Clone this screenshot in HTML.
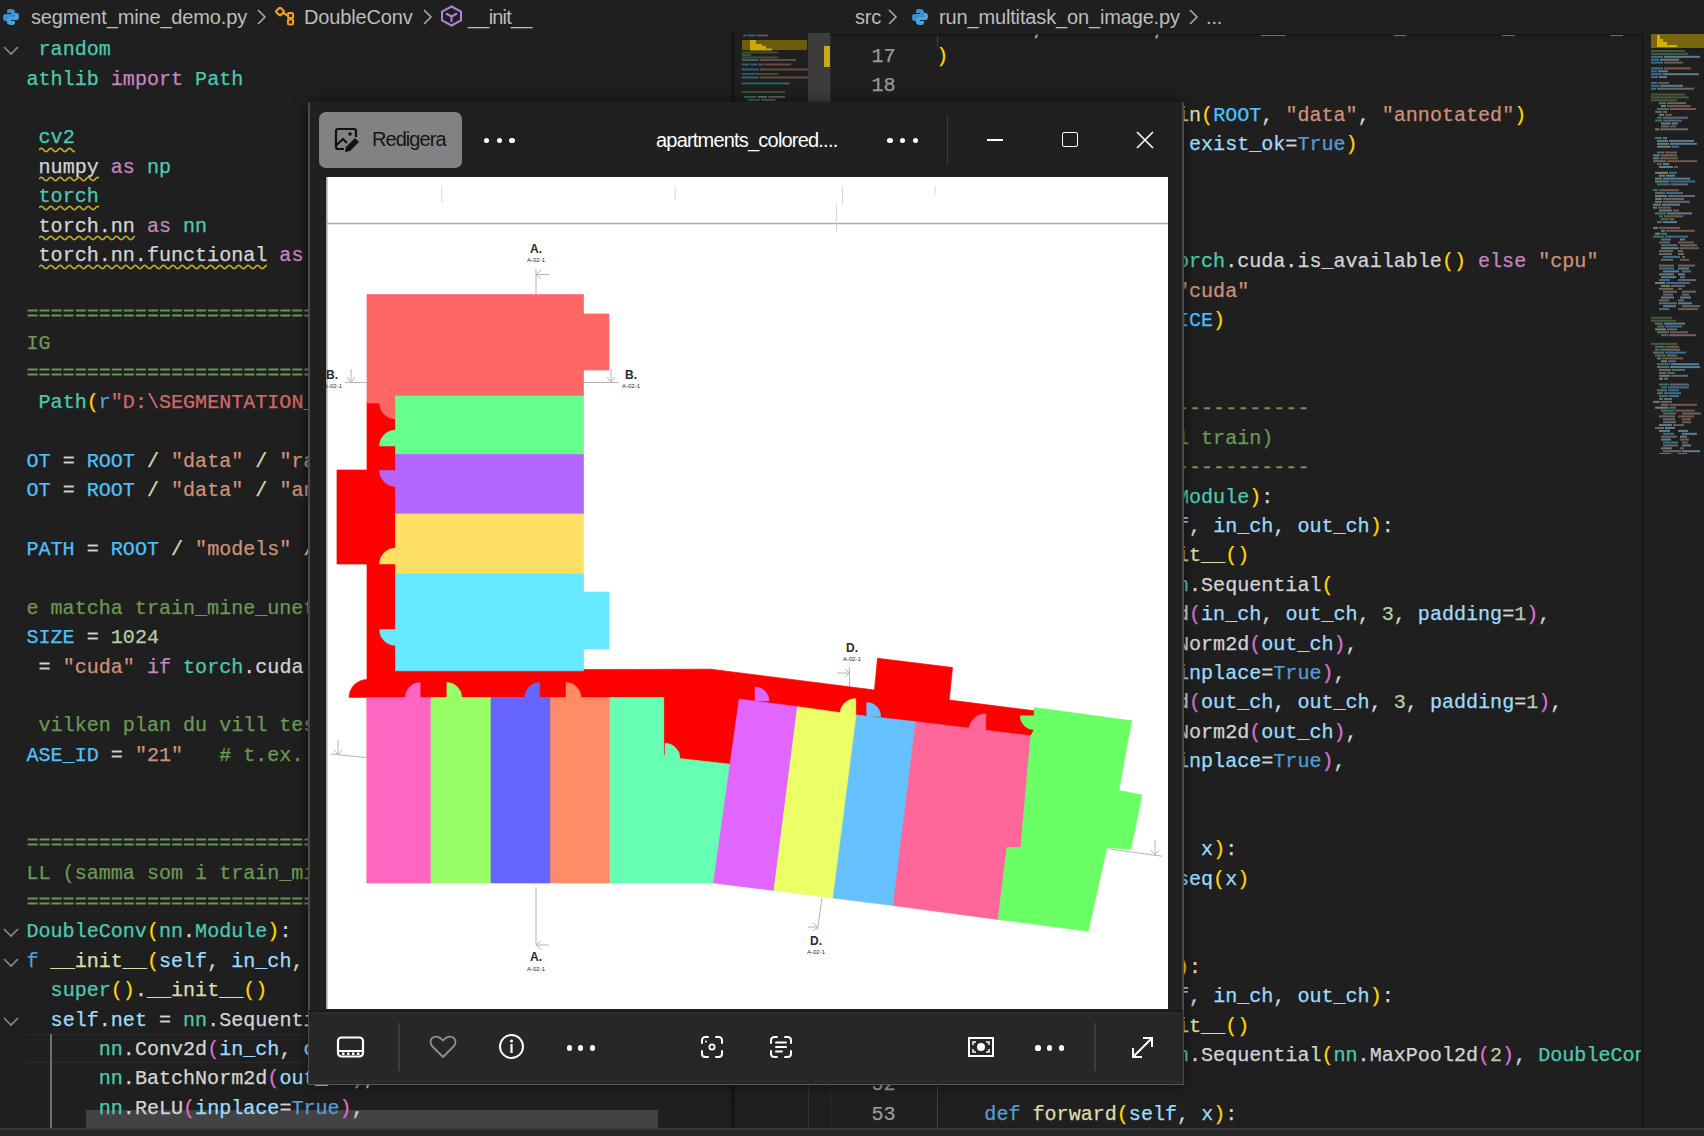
<!DOCTYPE html><html><head><meta charset="utf-8"><style>
*{margin:0;padding:0;box-sizing:border-box}
html,body{width:1704px;height:1136px;overflow:hidden;background:#1f1f1f}
body{position:relative;font-family:"Liberation Sans",sans-serif}
.ab{position:absolute}
.code{position:absolute;font-family:"Liberation Mono",monospace;font-size:20.075px;-webkit-text-stroke:0.25px currentColor;line-height:29.4px;height:29.4px;white-space:pre}
.bc{position:absolute;font-family:"Liberation Sans",sans-serif;font-size:20px;letter-spacing:-0.15px;line-height:24px;color:#bdbdbd;white-space:pre}
</style></head><body>
<div class="ab" style="left:0;top:0;width:830px;height:1128px;overflow:hidden"><div class="ab" style="left:86px;top:1110px;width:572px;height:18px;background:#434343"></div><div class="code" style="left:26.5px;top:35.1px"><span style="color:#D4D4D4"> </span><span style="color:#4EC9B0">random</span></div><div class="code" style="left:26.5px;top:64.5px"><span style="color:#4EC9B0">athlib</span><span style="color:#D4D4D4"> </span><span style="color:#C586C0">import</span><span style="color:#D4D4D4"> </span><span style="color:#4EC9B0">Path</span></div><div class="code" style="left:26.5px;top:123.3px"><span style="color:#D4D4D4"> </span><span style="color:#4EC9B0">cv2</span></div><div class="code" style="left:26.5px;top:152.7px"><span style="color:#D4D4D4"> </span><span style="color:#D4D4D4">numpy</span><span style="color:#D4D4D4"> </span><span style="color:#C586C0">as</span><span style="color:#D4D4D4"> </span><span style="color:#4EC9B0">np</span></div><div class="code" style="left:26.5px;top:182.1px"><span style="color:#D4D4D4"> </span><span style="color:#4EC9B0">torch</span></div><div class="code" style="left:26.5px;top:211.5px"><span style="color:#D4D4D4"> </span><span style="color:#D4D4D4">torch.nn</span><span style="color:#D4D4D4"> </span><span style="color:#C586C0">as</span><span style="color:#D4D4D4"> </span><span style="color:#4EC9B0">nn</span></div><div class="code" style="left:26.5px;top:240.9px"><span style="color:#D4D4D4"> </span><span style="color:#D4D4D4">torch.nn.functional</span><span style="color:#D4D4D4"> </span><span style="color:#C586C0">as</span><span style="color:#D4D4D4"> </span><span style="color:#4EC9B0">F</span></div><div class="code" style="left:26.5px;top:299.8px"><span style="color:#6A9955">======================================================================</span></div><div class="code" style="left:26.5px;top:329.2px"><span style="color:#6A9955">IG</span></div><div class="code" style="left:26.5px;top:358.6px"><span style="color:#6A9955">======================================================================</span></div><div class="code" style="left:26.5px;top:388.0px"><span style="color:#D4D4D4"> </span><span style="color:#4EC9B0">Path</span><span style="color:#FFD700">(</span><span style="color:#569CD6">r</span><span style="color:#D16969">&quot;D:\SEGMENTATION_DATA&quot;</span><span style="color:#FFD700">)</span></div><div class="code" style="left:26.5px;top:446.8px"><span style="color:#4FC1FF">OT</span><span style="color:#D4D4D4"> = </span><span style="color:#4FC1FF">ROOT</span><span style="color:#D8D8B0"> / </span><span style="color:#CE9178">&quot;data&quot;</span><span style="color:#D8D8B0"> / </span><span style="color:#CE9178">&quot;raw&quot;</span></div><div class="code" style="left:26.5px;top:476.2px"><span style="color:#4FC1FF">OT</span><span style="color:#D4D4D4"> = </span><span style="color:#4FC1FF">ROOT</span><span style="color:#D8D8B0"> / </span><span style="color:#CE9178">&quot;data&quot;</span><span style="color:#D8D8B0"> / </span><span style="color:#CE9178">&quot;annotated&quot;</span></div><div class="code" style="left:26.5px;top:535.0px"><span style="color:#4FC1FF">PATH</span><span style="color:#D4D4D4"> = </span><span style="color:#4FC1FF">ROOT</span><span style="color:#D8D8B0"> / </span><span style="color:#CE9178">&quot;models&quot;</span><span style="color:#D8D8B0"> / </span><span style="color:#CE9178">&quot;unet.pth&quot;</span></div><div class="code" style="left:26.5px;top:593.8px"><span style="color:#6A9955">e matcha train_mine_unet.py</span></div><div class="code" style="left:26.5px;top:623.2px"><span style="color:#4FC1FF">SIZE</span><span style="color:#D4D4D4"> = </span><span style="color:#B5CEA8">1024</span></div><div class="code" style="left:26.5px;top:652.6px"><span style="color:#D4D4D4"> = </span><span style="color:#CE9178">&quot;cuda&quot;</span><span style="color:#D4D4D4"> </span><span style="color:#C586C0">if</span><span style="color:#D4D4D4"> </span><span style="color:#4EC9B0">torch</span><span style="color:#D4D4D4">.cuda.is_available</span><span style="color:#FFD700">()</span></div><div class="code" style="left:26.5px;top:711.4px"><span style="color:#6A9955"> vilken plan du vill testa</span></div><div class="code" style="left:26.5px;top:740.8px"><span style="color:#4FC1FF">ASE_ID</span><span style="color:#D4D4D4"> = </span><span style="color:#CE9178">&quot;21&quot;</span><span style="color:#D4D4D4">   </span><span style="color:#6A9955"># t.ex. 21</span></div><div class="code" style="left:26.5px;top:829.1px"><span style="color:#6A9955">======================================================================</span></div><div class="code" style="left:26.5px;top:858.5px"><span style="color:#6A9955">LL (samma som i train_mine_unet.py)</span></div><div class="code" style="left:26.5px;top:887.9px"><span style="color:#6A9955">======================================================================</span></div><div class="code" style="left:26.5px;top:917.3px"><span style="color:#4EC9B0">DoubleConv</span><span style="color:#FFD700">(</span><span style="color:#4EC9B0">nn</span><span style="color:#D4D4D4">.</span><span style="color:#4EC9B0">Module</span><span style="color:#FFD700">)</span><span style="color:#D4D4D4">:</span></div><div class="code" style="left:26.5px;top:946.7px"><span style="color:#569CD6">f</span><span style="color:#D4D4D4"> </span><span style="color:#DCDCAA">__init__</span><span style="color:#FFD700">(</span><span style="color:#9CDCFE">self</span><span style="color:#D4D4D4">, </span><span style="color:#9CDCFE">in_ch</span><span style="color:#D4D4D4">, </span><span style="color:#9CDCFE">out_ch</span><span style="color:#FFD700">)</span><span style="color:#D4D4D4">:</span></div><div class="code" style="left:26.5px;top:976.1px"><span style="color:#D4D4D4">  </span><span style="color:#4EC9B0">super</span><span style="color:#FFD700">()</span><span style="color:#D4D4D4">.</span><span style="color:#DCDCAA">__init__</span><span style="color:#FFD700">()</span></div><div class="code" style="left:26.5px;top:1005.5px"><span style="color:#D4D4D4">  </span><span style="color:#9CDCFE">self</span><span style="color:#D4D4D4">.</span><span style="color:#9CDCFE">net</span><span style="color:#D4D4D4"> = </span><span style="color:#4EC9B0">nn</span><span style="color:#D4D4D4">.Sequential</span><span style="color:#FFD700">(</span></div><div class="code" style="left:26.5px;top:1034.9px"><span style="color:#D4D4D4">      </span><span style="color:#4EC9B0">nn</span><span style="color:#D4D4D4">.Conv2d</span><span style="color:#DA70D6">(</span><span style="color:#9CDCFE">in_ch</span><span style="color:#D4D4D4">, </span><span style="color:#9CDCFE">out_ch</span><span style="color:#D4D4D4">, </span><span style="color:#B5CEA8">3</span><span style="color:#DA70D6">)</span><span style="color:#D4D4D4">,</span></div><div class="code" style="left:26.5px;top:1064.3px"><span style="color:#D4D4D4">      </span><span style="color:#4EC9B0">nn</span><span style="color:#D4D4D4">.BatchNorm2d</span><span style="color:#DA70D6">(</span><span style="color:#9CDCFE">out_ch</span><span style="color:#DA70D6">)</span><span style="color:#D4D4D4">,</span></div><div class="code" style="left:26.5px;top:1093.7px"><span style="color:#D4D4D4">      </span><span style="color:#4EC9B0">nn</span><span style="color:#D4D4D4">.ReLU</span><span style="color:#DA70D6">(</span><span style="color:#9CDCFE">inplace</span><span style="color:#D4D4D4">=</span><span style="color:#569CD6">True</span><span style="color:#DA70D6">)</span><span style="color:#D4D4D4">,</span></div><svg class="ab" style="left:38.5px;top:145.5px" width="36" height="8"><path d="M0 4 q2.35 -3.4 4.7 0 q2.35 3.4 4.7 0 q2.35 -3.4 4.7 0 q2.35 3.4 4.7 0 q2.35 -3.4 4.7 0 q2.35 3.4 4.7 0 q2.35 -3.4 4.7 0 q2.35 3.4 4.7 0" fill="none" stroke="#BBA835" stroke-width="1.7"/></svg><svg class="ab" style="left:38.5px;top:174.9px" width="60" height="8"><path d="M0 4 q2.35 -3.4 4.7 0 q2.35 3.4 4.7 0 q2.35 -3.4 4.7 0 q2.35 3.4 4.7 0 q2.35 -3.4 4.7 0 q2.35 3.4 4.7 0 q2.35 -3.4 4.7 0 q2.35 3.4 4.7 0 q2.35 -3.4 4.7 0 q2.35 3.4 4.7 0 q2.35 -3.4 4.7 0 q2.35 3.4 4.7 0 q2.35 -3.4 4.7 0 q2.35 3.4 4.7 0" fill="none" stroke="#BBA835" stroke-width="1.7"/></svg><svg class="ab" style="left:38.5px;top:204.3px" width="60" height="8"><path d="M0 4 q2.35 -3.4 4.7 0 q2.35 3.4 4.7 0 q2.35 -3.4 4.7 0 q2.35 3.4 4.7 0 q2.35 -3.4 4.7 0 q2.35 3.4 4.7 0 q2.35 -3.4 4.7 0 q2.35 3.4 4.7 0 q2.35 -3.4 4.7 0 q2.35 3.4 4.7 0 q2.35 -3.4 4.7 0 q2.35 3.4 4.7 0 q2.35 -3.4 4.7 0 q2.35 3.4 4.7 0" fill="none" stroke="#BBA835" stroke-width="1.7"/></svg><svg class="ab" style="left:38.5px;top:233.7px" width="96" height="8"><path d="M0 4 q2.35 -3.4 4.7 0 q2.35 3.4 4.7 0 q2.35 -3.4 4.7 0 q2.35 3.4 4.7 0 q2.35 -3.4 4.7 0 q2.35 3.4 4.7 0 q2.35 -3.4 4.7 0 q2.35 3.4 4.7 0 q2.35 -3.4 4.7 0 q2.35 3.4 4.7 0 q2.35 -3.4 4.7 0 q2.35 3.4 4.7 0 q2.35 -3.4 4.7 0 q2.35 3.4 4.7 0 q2.35 -3.4 4.7 0 q2.35 3.4 4.7 0 q2.35 -3.4 4.7 0 q2.35 3.4 4.7 0 q2.35 -3.4 4.7 0 q2.35 3.4 4.7 0 q2.35 -3.4 4.7 0 q2.35 3.4 4.7 0" fill="none" stroke="#BBA835" stroke-width="1.7"/></svg><svg class="ab" style="left:38.5px;top:263.1px" width="228" height="8"><path d="M0 4 q2.35 -3.4 4.7 0 q2.35 3.4 4.7 0 q2.35 -3.4 4.7 0 q2.35 3.4 4.7 0 q2.35 -3.4 4.7 0 q2.35 3.4 4.7 0 q2.35 -3.4 4.7 0 q2.35 3.4 4.7 0 q2.35 -3.4 4.7 0 q2.35 3.4 4.7 0 q2.35 -3.4 4.7 0 q2.35 3.4 4.7 0 q2.35 -3.4 4.7 0 q2.35 3.4 4.7 0 q2.35 -3.4 4.7 0 q2.35 3.4 4.7 0 q2.35 -3.4 4.7 0 q2.35 3.4 4.7 0 q2.35 -3.4 4.7 0 q2.35 3.4 4.7 0 q2.35 -3.4 4.7 0 q2.35 3.4 4.7 0 q2.35 -3.4 4.7 0 q2.35 3.4 4.7 0 q2.35 -3.4 4.7 0 q2.35 3.4 4.7 0 q2.35 -3.4 4.7 0 q2.35 3.4 4.7 0 q2.35 -3.4 4.7 0 q2.35 3.4 4.7 0 q2.35 -3.4 4.7 0 q2.35 3.4 4.7 0 q2.35 -3.4 4.7 0 q2.35 3.4 4.7 0 q2.35 -3.4 4.7 0 q2.35 3.4 4.7 0 q2.35 -3.4 4.7 0 q2.35 3.4 4.7 0 q2.35 -3.4 4.7 0 q2.35 3.4 4.7 0 q2.35 -3.4 4.7 0 q2.35 3.4 4.7 0 q2.35 -3.4 4.7 0 q2.35 3.4 4.7 0 q2.35 -3.4 4.7 0 q2.35 3.4 4.7 0 q2.35 -3.4 4.7 0 q2.35 3.4 4.7 0 q2.35 -3.4 4.7 0 q2.35 3.4 4.7 0" fill="none" stroke="#BBA835" stroke-width="1.7"/></svg><svg class="ab" style="left:2px;top:45.1px" width="18" height="12"><path d="M2 2 L9 9 L16 2" fill="none" stroke="#8a8a8a" stroke-width="1.6"/></svg><svg class="ab" style="left:2px;top:927.3px" width="18" height="12"><path d="M2 2 L9 9 L16 2" fill="none" stroke="#8a8a8a" stroke-width="1.6"/></svg><svg class="ab" style="left:2px;top:956.7px" width="18" height="12"><path d="M2 2 L9 9 L16 2" fill="none" stroke="#8a8a8a" stroke-width="1.6"/></svg><svg class="ab" style="left:2px;top:1015.5px" width="18" height="12"><path d="M2 2 L9 9 L16 2" fill="none" stroke="#8a8a8a" stroke-width="1.6"/></svg><div class="ab" style="left:26px;top:1034px;width:804px;height:29px;border-top:1.5px solid #2a2a2a;border-bottom:1.5px solid #2a2a2a"></div><div class="ab" style="left:50px;top:1034px;width:2px;height:94px;background:#707070"></div></div><div class="ab" style="left:0;top:0;width:830px;height:34px;background:#1f1f1f"></div><div class="bc" style="left:31px;top:5px">segment_mine_demo.py</div><div class="bc" style="left:304px;top:5px">DoubleConv</div><div class="bc" style="left:468px;top:5px;letter-spacing:-0.8px">__init__</div><svg class="ab" style="left:256px;top:8px" width="12" height="18"><path d="M2 2 L9 9 L2 16" fill="none" stroke="#a9a9a9" stroke-width="1.6"/></svg><svg class="ab" style="left:422px;top:8px" width="12" height="18"><path d="M2 2 L9 9 L2 16" fill="none" stroke="#a9a9a9" stroke-width="1.6"/></svg><svg class="ab" style="left:2px;top:8px" width="18" height="18" viewBox="0 0 18 18"><path d="M8.5 1 C5 1 5 2.5 5 3.5 V5 H9 V6 H3.5 C2 6 1 7 1 9.5 C1 12 2 13 3.3 13 H5 V11 C5 9.8 6 9 7 9 H11 C12 9 13 8.3 13 7 V3.5 C13 2 11.7 1 8.5 1 Z" fill="#3b8fd0"/><path d="M9.5 17 C13 17 13 15.5 13 14.5 V13 H9 V12 H14.5 C16 12 17 11 17 8.5 C17 6 16 5 14.7 5 H13 V7 C13 8.2 12 9 11 9 H7 C6 9 5 9.7 5 11 V14.5 C5 16 6.3 17 9.5 17 Z" fill="#4aa3e0"/></svg><svg class="ab" style="left:275px;top:7px" width="22" height="19" viewBox="0 0 22 19"><g fill="none" stroke="#EE9D28" stroke-width="2.2"><rect x="2" y="1.5" width="6" height="6" rx="1" transform="rotate(45 5 4.5)"/><rect x="13" y="6" width="5" height="5" rx="1"/><rect x="13" y="12.5" width="5" height="5" rx="1"/><path d="M8 6 L13 8.5 M15.5 11 V12.5"/></g></svg><svg class="ab" style="left:440px;top:5px" width="23" height="22" viewBox="0 0 23 22"><g fill="none" stroke="#B180D7" stroke-width="2"><path d="M11.5 1.5 L21 6.5 V15.5 L11.5 20.5 L2 15.5 V6.5 Z"/><path d="M6 8.5 L11.5 11.5 L17 8.5 M11.5 11.5 V17"/></g></svg><div class="ab" style="left:830px;top:0;width:1px;height:1128px;background:#2b2b2b"></div><div class="ab" style="left:831px;top:0;width:873px;height:1128px;overflow:hidden"><div class="code" style="left:105.2px;top:14.1px"><span style="color:#D4D4D4">        </span><span style="color:#D4D4D4">,</span><span style="color:#D4D4D4">         </span><span style="color:#D4D4D4">,</span><span style="color:#D4D4D4">        </span><span style="color:#CE9178">__</span><span style="color:#D4D4D4">         </span><span style="color:#CE9178">_</span><span style="color:#D4D4D4">        </span><span style="color:#CE9178">_</span><span style="color:#D4D4D4">        </span><span style="color:#CE9178">_</span></div><div class="code" style="left:105.2px;top:41.7px"><span style="color:#FFD700">)</span></div><div class="code" style="left:105.2px;top:100.5px"><span style="color:#D4D4D4">                    </span><span style="color:#DCDCAA">i</span><span style="color:#DCDCAA">n</span><span style="color:#FFD700">(</span><span style="color:#4FC1FF">ROOT</span><span style="color:#D4D4D4">, </span><span style="color:#CE9178">&quot;data&quot;</span><span style="color:#D4D4D4">, </span><span style="color:#CE9178">&quot;annotated&quot;</span><span style="color:#FFD700">)</span></div><div class="code" style="left:105.2px;top:129.9px"><span style="color:#D4D4D4">                    </span><span style="color:#D4D4D4"> </span><span style="color:#9CDCFE">exist_ok</span><span style="color:#D4D4D4">=</span><span style="color:#569CD6">True</span><span style="color:#FFD700">)</span></div><div class="code" style="left:105.2px;top:247.4px"><span style="color:#D4D4D4">                    </span><span style="color:#4EC9B0">orch</span><span style="color:#D4D4D4">.cuda.is_available</span><span style="color:#FFD700">()</span><span style="color:#D4D4D4"> </span><span style="color:#C586C0">else</span><span style="color:#D4D4D4"> </span><span style="color:#CE9178">&quot;cpu&quot;</span></div><div class="code" style="left:105.2px;top:276.8px"><span style="color:#D4D4D4">                    </span><span style="color:#CE9178">&quot;cuda&quot;</span></div><div class="code" style="left:105.2px;top:306.2px"><span style="color:#D4D4D4">                    </span><span style="color:#4FC1FF">ICE</span><span style="color:#FFD700">)</span></div><div class="code" style="left:105.2px;top:394.4px"><span style="color:#D4D4D4">                    </span><span style="color:#6A9955">-----------</span></div><div class="code" style="left:105.2px;top:423.8px"><span style="color:#D4D4D4">                    </span><span style="color:#6A9955">i train)</span></div><div class="code" style="left:105.2px;top:453.2px"><span style="color:#D4D4D4">                    </span><span style="color:#6A9955">-----------</span></div><div class="code" style="left:105.2px;top:482.6px"><span style="color:#D4D4D4">                    </span><span style="color:#4EC9B0">Module</span><span style="color:#FFD700">)</span><span style="color:#D4D4D4">:</span></div><div class="code" style="left:105.2px;top:511.9px"><span style="color:#D4D4D4">                    </span><span style="color:#9CDCFE">f</span><span style="color:#D4D4D4">, </span><span style="color:#9CDCFE">in_ch</span><span style="color:#D4D4D4">, </span><span style="color:#9CDCFE">out_ch</span><span style="color:#FFD700">)</span><span style="color:#D4D4D4">:</span></div><div class="code" style="left:105.2px;top:541.3px"><span style="color:#D4D4D4">                    </span><span style="color:#DCDCAA">it__</span><span style="color:#FFD700">()</span></div><div class="code" style="left:105.2px;top:570.7px"><span style="color:#D4D4D4">                    </span><span style="color:#4EC9B0">n</span><span style="color:#D4D4D4">.Sequential</span><span style="color:#FFD700">(</span></div><div class="code" style="left:105.2px;top:600.1px"><span style="color:#D4D4D4">                    </span><span style="color:#D4D4D4">d</span><span style="color:#DA70D6">(</span><span style="color:#9CDCFE">in_ch</span><span style="color:#D4D4D4">, </span><span style="color:#9CDCFE">out_ch</span><span style="color:#D4D4D4">, </span><span style="color:#B5CEA8">3</span><span style="color:#D4D4D4">, </span><span style="color:#9CDCFE">padding</span><span style="color:#D4D4D4">=</span><span style="color:#B5CEA8">1</span><span style="color:#DA70D6">)</span><span style="color:#D4D4D4">,</span></div><div class="code" style="left:105.2px;top:629.5px"><span style="color:#D4D4D4">                    </span><span style="color:#D4D4D4">Norm2d</span><span style="color:#DA70D6">(</span><span style="color:#9CDCFE">out_ch</span><span style="color:#DA70D6">)</span><span style="color:#D4D4D4">,</span></div><div class="code" style="left:105.2px;top:658.9px"><span style="color:#D4D4D4">                    </span><span style="color:#9CDCFE">inplace</span><span style="color:#D4D4D4">=</span><span style="color:#569CD6">True</span><span style="color:#DA70D6">)</span><span style="color:#D4D4D4">,</span></div><div class="code" style="left:105.2px;top:688.3px"><span style="color:#D4D4D4">                    </span><span style="color:#D4D4D4">d</span><span style="color:#DA70D6">(</span><span style="color:#9CDCFE">out_ch</span><span style="color:#D4D4D4">, </span><span style="color:#9CDCFE">out_ch</span><span style="color:#D4D4D4">, </span><span style="color:#B5CEA8">3</span><span style="color:#D4D4D4">, </span><span style="color:#9CDCFE">padding</span><span style="color:#D4D4D4">=</span><span style="color:#B5CEA8">1</span><span style="color:#DA70D6">)</span><span style="color:#D4D4D4">,</span></div><div class="code" style="left:105.2px;top:717.7px"><span style="color:#D4D4D4">                    </span><span style="color:#D4D4D4">Norm2d</span><span style="color:#DA70D6">(</span><span style="color:#9CDCFE">out_ch</span><span style="color:#DA70D6">)</span><span style="color:#D4D4D4">,</span></div><div class="code" style="left:105.2px;top:747.1px"><span style="color:#D4D4D4">                    </span><span style="color:#9CDCFE">inplace</span><span style="color:#D4D4D4">=</span><span style="color:#569CD6">True</span><span style="color:#DA70D6">)</span><span style="color:#D4D4D4">,</span></div><div class="code" style="left:105.2px;top:835.2px"><span style="color:#D4D4D4">                    </span><span style="color:#D4D4D4">,</span><span style="color:#D4D4D4"> </span><span style="color:#9CDCFE">x</span><span style="color:#FFD700">)</span><span style="color:#D4D4D4">:</span></div><div class="code" style="left:105.2px;top:864.6px"><span style="color:#D4D4D4">                    </span><span style="color:#9CDCFE">seq</span><span style="color:#FFD700">(</span><span style="color:#9CDCFE">x</span><span style="color:#FFD700">)</span></div><div class="code" style="left:105.2px;top:952.8px"><span style="color:#D4D4D4">                    </span><span style="color:#FFD700">)</span><span style="color:#D4D4D4">:</span></div><div class="code" style="left:105.2px;top:982.2px"><span style="color:#D4D4D4">                    </span><span style="color:#9CDCFE">f</span><span style="color:#D4D4D4">, </span><span style="color:#9CDCFE">in_ch</span><span style="color:#D4D4D4">, </span><span style="color:#9CDCFE">out_ch</span><span style="color:#FFD700">)</span><span style="color:#D4D4D4">:</span></div><div class="code" style="left:105.2px;top:1011.6px"><span style="color:#D4D4D4">                    </span><span style="color:#DCDCAA">it__</span><span style="color:#FFD700">()</span></div><div class="code" style="left:105.2px;top:1041.0px"><span style="color:#D4D4D4">                    </span><span style="color:#4EC9B0">n</span><span style="color:#D4D4D4">.Sequential</span><span style="color:#FFD700">(</span><span style="color:#4EC9B0">nn</span><span style="color:#D4D4D4">.MaxPool2d</span><span style="color:#DA70D6">(</span><span style="color:#B5CEA8">2</span><span style="color:#DA70D6">)</span><span style="color:#D4D4D4">, </span><span style="color:#4EC9B0">DoubleConv</span><span style="color:#DA70D6">(</span><span style="color:#9CDCFE">in_ch</span><span style="color:#D4D4D4">, </span><span style="color:#9CDCFE">out_ch</span><span style="color:#DA70D6">)</span><span style="color:#FFD700">)</span></div><div class="code" style="left:105.2px;top:1099.7px"><span style="color:#D4D4D4">    </span><span style="color:#569CD6">def</span><span style="color:#D4D4D4"> </span><span style="color:#DCDCAA">forward</span><span style="color:#FFD700">(</span><span style="color:#9CDCFE">self</span><span style="color:#D4D4D4">, </span><span style="color:#9CDCFE">x</span><span style="color:#FFD700">)</span><span style="color:#D4D4D4">:</span></div><div class="code" style="left:4.5px;top:12.3px;width:60px;text-align:right;color:#9a9a9a">16</div><div class="code" style="left:4.5px;top:41.7px;width:60px;text-align:right;color:#9a9a9a">17</div><div class="code" style="left:4.5px;top:71.1px;width:60px;text-align:right;color:#9a9a9a">18</div><div class="code" style="left:4.5px;top:100.5px;width:60px;text-align:right;color:#9a9a9a">19</div><div class="code" style="left:4.5px;top:129.9px;width:60px;text-align:right;color:#9a9a9a">20</div><div class="code" style="left:4.5px;top:159.3px;width:60px;text-align:right;color:#9a9a9a">21</div><div class="code" style="left:4.5px;top:188.7px;width:60px;text-align:right;color:#9a9a9a">22</div><div class="code" style="left:4.5px;top:218.0px;width:60px;text-align:right;color:#9a9a9a">23</div><div class="code" style="left:4.5px;top:247.4px;width:60px;text-align:right;color:#9a9a9a">24</div><div class="code" style="left:4.5px;top:276.8px;width:60px;text-align:right;color:#9a9a9a">25</div><div class="code" style="left:4.5px;top:306.2px;width:60px;text-align:right;color:#9a9a9a">26</div><div class="code" style="left:4.5px;top:335.6px;width:60px;text-align:right;color:#9a9a9a">27</div><div class="code" style="left:4.5px;top:365.0px;width:60px;text-align:right;color:#9a9a9a">28</div><div class="code" style="left:4.5px;top:394.4px;width:60px;text-align:right;color:#9a9a9a">29</div><div class="code" style="left:4.5px;top:423.8px;width:60px;text-align:right;color:#9a9a9a">30</div><div class="code" style="left:4.5px;top:453.2px;width:60px;text-align:right;color:#9a9a9a">31</div><div class="code" style="left:4.5px;top:482.6px;width:60px;text-align:right;color:#9a9a9a">32</div><div class="code" style="left:4.5px;top:511.9px;width:60px;text-align:right;color:#9a9a9a">33</div><div class="code" style="left:4.5px;top:541.3px;width:60px;text-align:right;color:#9a9a9a">34</div><div class="code" style="left:4.5px;top:570.7px;width:60px;text-align:right;color:#9a9a9a">35</div><div class="code" style="left:4.5px;top:600.1px;width:60px;text-align:right;color:#9a9a9a">36</div><div class="code" style="left:4.5px;top:629.5px;width:60px;text-align:right;color:#9a9a9a">37</div><div class="code" style="left:4.5px;top:658.9px;width:60px;text-align:right;color:#9a9a9a">38</div><div class="code" style="left:4.5px;top:688.3px;width:60px;text-align:right;color:#9a9a9a">39</div><div class="code" style="left:4.5px;top:717.7px;width:60px;text-align:right;color:#9a9a9a">40</div><div class="code" style="left:4.5px;top:747.1px;width:60px;text-align:right;color:#9a9a9a">41</div><div class="code" style="left:4.5px;top:776.4px;width:60px;text-align:right;color:#9a9a9a">42</div><div class="code" style="left:4.5px;top:805.8px;width:60px;text-align:right;color:#9a9a9a">43</div><div class="code" style="left:4.5px;top:835.2px;width:60px;text-align:right;color:#9a9a9a">44</div><div class="code" style="left:4.5px;top:864.6px;width:60px;text-align:right;color:#9a9a9a">45</div><div class="code" style="left:4.5px;top:894.0px;width:60px;text-align:right;color:#9a9a9a">46</div><div class="code" style="left:4.5px;top:923.4px;width:60px;text-align:right;color:#9a9a9a">47</div><div class="code" style="left:4.5px;top:952.8px;width:60px;text-align:right;color:#9a9a9a">48</div><div class="code" style="left:4.5px;top:982.2px;width:60px;text-align:right;color:#9a9a9a">49</div><div class="code" style="left:4.5px;top:1011.6px;width:60px;text-align:right;color:#9a9a9a">50</div><div class="code" style="left:4.5px;top:1041.0px;width:60px;text-align:right;color:#9a9a9a">51</div><div class="code" style="left:4.5px;top:1070.4px;width:60px;text-align:right;color:#9a9a9a">52</div><div class="code" style="left:4.5px;top:1099.7px;width:60px;text-align:right;color:#9a9a9a">53</div><div class="ab" style="left:105.7px;top:35px;width:1px;height:12px;background:#404040"></div><div class="ab" style="left:105.7px;top:1086px;width:1px;height:42px;background:#404040"></div></div><div class="ab" style="left:831px;top:0;width:873px;height:34px;background:#1f1f1f;box-shadow:0 1px 2px #111"></div><div class="bc" style="left:855px;top:5px">src</div><div class="bc" style="left:939px;top:5px">run_multitask_on_image.py</div><div class="bc" style="left:1206px;top:5px">...</div><svg class="ab" style="left:887px;top:8px" width="12" height="18"><path d="M2 2 L9 9 L2 16" fill="none" stroke="#a9a9a9" stroke-width="1.6"/></svg><svg class="ab" style="left:1188px;top:8px" width="12" height="18"><path d="M2 2 L9 9 L2 16" fill="none" stroke="#a9a9a9" stroke-width="1.6"/></svg><svg class="ab" style="left:911px;top:8px" width="18" height="18" viewBox="0 0 18 18"><path d="M8.5 1 C5 1 5 2.5 5 3.5 V5 H9 V6 H3.5 C2 6 1 7 1 9.5 C1 12 2 13 3.3 13 H5 V11 C5 9.8 6 9 7 9 H11 C12 9 13 8.3 13 7 V3.5 C13 2 11.7 1 8.5 1 Z" fill="#3b8fd0"/><path d="M9.5 17 C13 17 13 15.5 13 14.5 V13 H9 V12 H14.5 C16 12 17 11 17 8.5 C17 6 16 5 14.7 5 H13 V7 C13 8.2 12 9 11 9 H7 C6 9 5 9.7 5 11 V14.5 C5 16 6.3 17 9.5 17 Z" fill="#4aa3e0"/></svg><div class="ab" style="left:0;top:1128px;width:1704px;height:8px;background:#242424;border-top:2px solid #3a3a3a"></div><div class="ab" style="left:731px;top:33px;width:4px;height:1095px;background:#161616"></div><div class="ab" style="left:808px;top:33px;width:1px;height:1095px;background:#333"></div><svg class="ab" style="left:737px;top:33px" width="71" height="70"><rect x="6.0" y="1.5" width="3.6" height="1.9" fill="#C586C0" opacity="0.42"/><rect x="10.8" y="1.5" width="7.2" height="1.9" fill="#4FC1FF" opacity="0.42"/><rect x="19.2" y="1.5" width="12.0" height="1.9" fill="#B0B0B0" opacity="0.42"/><rect x="4.8" y="18.5" width="36.0" height="1.9" fill="#6A9955" opacity="0.42"/><rect x="4.8" y="21.0" width="9.6" height="1.9" fill="#6A9955" opacity="0.42"/><rect x="4.8" y="23.5" width="36.0" height="1.9" fill="#6A9955" opacity="0.42"/><rect x="4.8" y="26.0" width="16.8" height="1.9" fill="#4FC1FF" opacity="0.42"/><rect x="22.8" y="26.0" width="36.0" height="1.9" fill="#CE9178" opacity="0.42"/><rect x="4.8" y="30.5" width="7.2" height="1.9" fill="#4FC1FF" opacity="0.42"/><rect x="13.2" y="30.5" width="7.2" height="1.9" fill="#4FC1FF" opacity="0.42"/><rect x="21.6" y="30.5" width="4.8" height="1.9" fill="#B0B0B0" opacity="0.42"/><rect x="27.6" y="30.5" width="26.4" height="1.9" fill="#CE9178" opacity="0.42"/><rect x="4.8" y="35.5" width="16.8" height="1.9" fill="#4FC1FF" opacity="0.42"/><rect x="22.8" y="35.5" width="54.0" height="1.9" fill="#CE9178" opacity="0.42"/><rect x="4.8" y="40.0" width="36.0" height="1.9" fill="#6A9955" opacity="0.42"/><rect x="4.8" y="43.5" width="16.8" height="1.9" fill="#4FC1FF" opacity="0.42"/><rect x="22.8" y="43.5" width="48.0" height="1.9" fill="#CE9178" opacity="0.42"/><rect x="4.8" y="49.5" width="48.0" height="1.9" fill="#4EC9B0" opacity="0.42"/><rect x="4.8" y="58.0" width="43.2" height="1.9" fill="#6A9955" opacity="0.42"/><rect x="7.2" y="63.0" width="12.0" height="1.9" fill="#4EC9B0" opacity="0.42"/><rect x="20.4" y="63.0" width="9.6" height="1.9" fill="#9CDCFE" opacity="0.42"/><rect x="31.2" y="63.0" width="16.8" height="1.9" fill="#B0B0B0" opacity="0.42"/><rect x="10.8" y="66.0" width="12.0" height="1.9" fill="#4EC9B0" opacity="0.42"/><rect x="24.0" y="66.0" width="14.4" height="1.9" fill="#B0B0B0" opacity="0.42"/></svg><div class="ab" style="left:742px;top:39.5px;width:65px;height:10.5px;background:#6e5c0c"></div><svg class="ab" style="left:742px;top:39.5px" width="65" height="11"><path d="M8 0 H14 V4 H20 V6 H24 V8.5 H30 V10.5 H8 Z" fill="#c9a800"/></svg><div class="ab" style="left:808px;top:33px;width:22px;height:70px;background:#3c3c3c"></div><div class="ab" style="left:823.5px;top:45.5px;width:6.5px;height:21px;background:#c9a820"></div><div class="ab" style="left:1642px;top:34px;width:62px;height:1094px;background:#1f1f1f"></div><div class="ab" style="left:1641px;top:34px;width:3px;height:1094px;background:#171717"></div><div class="ab" style="left:1651px;top:34px;width:53px;height:14px;background:#7a6610"></div><svg class="ab" style="left:1651px;top:34px" width="53" height="14"><path d="M6 1 H9 V5 H12 V8 H16 V11 H26 V13 H6 Z" fill="#d0b000"/></svg><svg class="ab" style="left:1651px;top:34px" width="53" height="420"><rect x="0.0" y="16.0" width="34.0" height="2.0" fill="#6A9955" opacity="0.50"/><rect x="0.0" y="18.9" width="37.0" height="2.0" fill="#6A9955" opacity="0.50"/><rect x="0.0" y="21.8" width="12.0" height="2.0" fill="#4FC1FF" opacity="0.50"/><rect x="13.0" y="21.8" width="36.0" height="2.0" fill="#9CDCFE" opacity="0.50"/><rect x="0.0" y="24.7" width="8.0" height="2.0" fill="#4FC1FF" opacity="0.50"/><rect x="9.0" y="24.7" width="19.0" height="2.0" fill="#9CDCFE" opacity="0.50"/><rect x="0.0" y="27.6" width="12.0" height="2.0" fill="#4FC1FF" opacity="0.50"/><rect x="13.0" y="27.6" width="19.0" height="2.0" fill="#CE9178" opacity="0.50"/><rect x="0.0" y="33.4" width="12.0" height="2.0" fill="#4FC1FF" opacity="0.50"/><rect x="13.0" y="33.4" width="27.0" height="2.0" fill="#CE9178" opacity="0.50"/><rect x="0.0" y="36.3" width="6.0" height="2.0" fill="#4FC1FF" opacity="0.50"/><rect x="7.0" y="36.3" width="10.0" height="2.0" fill="#9CDCFE" opacity="0.50"/><rect x="0.0" y="39.2" width="11.0" height="2.0" fill="#4FC1FF" opacity="0.50"/><rect x="12.0" y="39.2" width="36.0" height="2.0" fill="#9CDCFE" opacity="0.50"/><rect x="0.0" y="42.1" width="7.0" height="2.0" fill="#4FC1FF" opacity="0.50"/><rect x="8.0" y="42.1" width="8.0" height="2.0" fill="#9CDCFE" opacity="0.50"/><rect x="0.0" y="47.9" width="6.0" height="2.0" fill="#4FC1FF" opacity="0.50"/><rect x="7.0" y="47.9" width="11.0" height="2.0" fill="#CE9178" opacity="0.50"/><rect x="0.0" y="50.8" width="8.0" height="2.0" fill="#4FC1FF" opacity="0.50"/><rect x="9.0" y="50.8" width="23.0" height="2.0" fill="#9CDCFE" opacity="0.50"/><rect x="0.0" y="53.7" width="5.0" height="2.0" fill="#4FC1FF" opacity="0.50"/><rect x="6.0" y="53.7" width="37.0" height="2.0" fill="#B0B0B0" opacity="0.50"/><rect x="0.0" y="59.5" width="34.0" height="2.0" fill="#6A9955" opacity="0.50"/><rect x="0.0" y="62.4" width="38.0" height="2.0" fill="#6A9955" opacity="0.50"/><rect x="0.0" y="65.3" width="26.0" height="2.0" fill="#6A9955" opacity="0.50"/><rect x="8.0" y="68.2" width="7.0" height="2.0" fill="#B0B0B0" opacity="0.50"/><rect x="16.0" y="68.2" width="19.0" height="2.0" fill="#B0B0B0" opacity="0.50"/><rect x="10.0" y="71.1" width="5.0" height="2.0" fill="#DCDCAA" opacity="0.50"/><rect x="16.0" y="71.1" width="24.0" height="2.0" fill="#CE9178" opacity="0.50"/><rect x="6.0" y="74.0" width="12.0" height="2.0" fill="#4EC9B0" opacity="0.50"/><rect x="19.0" y="74.0" width="26.0" height="2.0" fill="#CE9178" opacity="0.50"/><rect x="4.0" y="76.9" width="7.0" height="2.0" fill="#B0B0B0" opacity="0.50"/><rect x="12.0" y="76.9" width="4.0" height="2.0" fill="#B0B0B0" opacity="0.50"/><rect x="8.0" y="79.8" width="5.0" height="2.0" fill="#DCDCAA" opacity="0.50"/><rect x="14.0" y="79.8" width="7.0" height="2.0" fill="#CE9178" opacity="0.50"/><rect x="6.0" y="82.7" width="5.0" height="2.0" fill="#4EC9B0" opacity="0.50"/><rect x="12.0" y="82.7" width="25.0" height="2.0" fill="#B0B0B0" opacity="0.50"/><rect x="4.0" y="85.6" width="7.0" height="2.0" fill="#4EC9B0" opacity="0.50"/><rect x="12.0" y="85.6" width="19.0" height="2.0" fill="#4FC1FF" opacity="0.50"/><rect x="10.0" y="88.5" width="10.0" height="2.0" fill="#DCDCAA" opacity="0.50"/><rect x="21.0" y="88.5" width="6.0" height="2.0" fill="#9CDCFE" opacity="0.50"/><rect x="10.0" y="91.4" width="8.0" height="2.0" fill="#B0B0B0" opacity="0.50"/><rect x="19.0" y="91.4" width="6.0" height="2.0" fill="#CE9178" opacity="0.50"/><rect x="4.0" y="94.3" width="4.0" height="2.0" fill="#DCDCAA" opacity="0.50"/><rect x="9.0" y="94.3" width="28.0" height="2.0" fill="#B0B0B0" opacity="0.50"/><rect x="4.0" y="103.0" width="7.0" height="2.0" fill="#4EC9B0" opacity="0.50"/><rect x="12.0" y="103.0" width="4.0" height="2.0" fill="#B0B0B0" opacity="0.50"/><rect x="6.0" y="105.9" width="11.0" height="2.0" fill="#9CDCFE" opacity="0.50"/><rect x="18.0" y="105.9" width="25.0" height="2.0" fill="#9CDCFE" opacity="0.50"/><rect x="6.0" y="108.8" width="12.0" height="2.0" fill="#9CDCFE" opacity="0.50"/><rect x="19.0" y="108.8" width="27.0" height="2.0" fill="#9CDCFE" opacity="0.50"/><rect x="6.0" y="111.7" width="14.0" height="2.0" fill="#DCDCAA" opacity="0.50"/><rect x="21.0" y="111.7" width="7.0" height="2.0" fill="#4FC1FF" opacity="0.50"/><rect x="6.0" y="117.5" width="7.0" height="2.0" fill="#4EC9B0" opacity="0.50"/><rect x="14.0" y="117.5" width="12.0" height="2.0" fill="#CE9178" opacity="0.50"/><rect x="2.0" y="120.4" width="7.0" height="2.0" fill="#9CDCFE" opacity="0.50"/><rect x="10.0" y="120.4" width="16.0" height="2.0" fill="#B0B0B0" opacity="0.50"/><rect x="2.0" y="123.3" width="6.0" height="2.0" fill="#9CDCFE" opacity="0.50"/><rect x="9.0" y="123.3" width="18.0" height="2.0" fill="#CE9178" opacity="0.50"/><rect x="2.0" y="126.2" width="13.0" height="2.0" fill="#B0B0B0" opacity="0.50"/><rect x="16.0" y="126.2" width="30.0" height="2.0" fill="#CE9178" opacity="0.50"/><rect x="6.0" y="129.1" width="5.0" height="2.0" fill="#4EC9B0" opacity="0.50"/><rect x="12.0" y="129.1" width="6.0" height="2.0" fill="#9CDCFE" opacity="0.50"/><rect x="8.0" y="132.0" width="14.0" height="2.0" fill="#9CDCFE" opacity="0.50"/><rect x="23.0" y="132.0" width="4.0" height="2.0" fill="#CE9178" opacity="0.50"/><rect x="4.0" y="137.8" width="13.0" height="2.0" fill="#DCDCAA" opacity="0.50"/><rect x="18.0" y="137.8" width="8.0" height="2.0" fill="#4FC1FF" opacity="0.50"/><rect x="8.0" y="140.7" width="6.0" height="2.0" fill="#DCDCAA" opacity="0.50"/><rect x="15.0" y="140.7" width="9.0" height="2.0" fill="#9CDCFE" opacity="0.50"/><rect x="4.0" y="143.6" width="7.0" height="2.0" fill="#9CDCFE" opacity="0.50"/><rect x="12.0" y="143.6" width="27.0" height="2.0" fill="#9CDCFE" opacity="0.50"/><rect x="4.0" y="146.5" width="14.0" height="2.0" fill="#9CDCFE" opacity="0.50"/><rect x="19.0" y="146.5" width="25.0" height="2.0" fill="#4FC1FF" opacity="0.50"/><rect x="6.0" y="149.4" width="13.0" height="2.0" fill="#4EC9B0" opacity="0.50"/><rect x="20.0" y="149.4" width="17.0" height="2.0" fill="#B0B0B0" opacity="0.50"/><rect x="2.0" y="155.2" width="5.0" height="2.0" fill="#4EC9B0" opacity="0.50"/><rect x="8.0" y="155.2" width="20.0" height="2.0" fill="#CE9178" opacity="0.50"/><rect x="4.0" y="158.1" width="10.0" height="2.0" fill="#B0B0B0" opacity="0.50"/><rect x="15.0" y="158.1" width="17.0" height="2.0" fill="#4FC1FF" opacity="0.50"/><rect x="4.0" y="161.0" width="12.0" height="2.0" fill="#9CDCFE" opacity="0.50"/><rect x="17.0" y="161.0" width="27.0" height="2.0" fill="#B0B0B0" opacity="0.50"/><rect x="4.0" y="163.9" width="7.0" height="2.0" fill="#DCDCAA" opacity="0.50"/><rect x="12.0" y="163.9" width="21.0" height="2.0" fill="#B0B0B0" opacity="0.50"/><rect x="4.0" y="166.8" width="7.0" height="2.0" fill="#9CDCFE" opacity="0.50"/><rect x="12.0" y="166.8" width="27.0" height="2.0" fill="#B0B0B0" opacity="0.50"/><rect x="2.0" y="169.7" width="8.0" height="2.0" fill="#DCDCAA" opacity="0.50"/><rect x="11.0" y="169.7" width="18.0" height="2.0" fill="#9CDCFE" opacity="0.50"/><rect x="2.0" y="172.6" width="4.0" height="2.0" fill="#9CDCFE" opacity="0.50"/><rect x="7.0" y="172.6" width="13.0" height="2.0" fill="#CE9178" opacity="0.50"/><rect x="8.0" y="175.5" width="13.0" height="2.0" fill="#9CDCFE" opacity="0.50"/><rect x="22.0" y="175.5" width="6.0" height="2.0" fill="#CE9178" opacity="0.50"/><rect x="4.0" y="178.4" width="11.0" height="2.0" fill="#B0B0B0" opacity="0.50"/><rect x="16.0" y="178.4" width="25.0" height="2.0" fill="#9CDCFE" opacity="0.50"/><rect x="8.0" y="181.3" width="4.0" height="2.0" fill="#4EC9B0" opacity="0.50"/><rect x="13.0" y="181.3" width="19.0" height="2.0" fill="#CE9178" opacity="0.50"/><rect x="10.0" y="184.2" width="8.0" height="2.0" fill="#4EC9B0" opacity="0.50"/><rect x="19.0" y="184.2" width="4.0" height="2.0" fill="#B0B0B0" opacity="0.50"/><rect x="6.0" y="187.1" width="5.0" height="2.0" fill="#B0B0B0" opacity="0.50"/><rect x="12.0" y="187.1" width="14.0" height="2.0" fill="#9CDCFE" opacity="0.50"/><rect x="2.0" y="192.9" width="5.0" height="2.0" fill="#DCDCAA" opacity="0.50"/><rect x="8.0" y="192.9" width="21.0" height="2.0" fill="#CE9178" opacity="0.50"/><rect x="10.0" y="195.8" width="4.0" height="2.0" fill="#9CDCFE" opacity="0.50"/><rect x="15.0" y="195.8" width="29.0" height="2.0" fill="#CE9178" opacity="0.50"/><rect x="4.0" y="198.7" width="5.0" height="2.0" fill="#DCDCAA" opacity="0.50"/><rect x="10.0" y="198.7" width="6.0" height="2.0" fill="#4FC1FF" opacity="0.50"/><rect x="2.0" y="201.6" width="11.0" height="2.0" fill="#4EC9B0" opacity="0.50"/><rect x="14.0" y="201.6" width="23.0" height="2.0" fill="#4FC1FF" opacity="0.50"/><rect x="10.0" y="204.5" width="10.0" height="2.0" fill="#B0B0B0" opacity="0.50"/><rect x="29.0" y="204.5" width="5.0" height="2.0" fill="#9CDCFE" opacity="0.50"/><rect x="8.0" y="207.4" width="11.0" height="2.0" fill="#4FC1FF" opacity="0.50"/><rect x="27.0" y="207.4" width="16.0" height="2.0" fill="#CE9178" opacity="0.50"/><rect x="10.0" y="210.3" width="16.0" height="2.0" fill="#B0B0B0" opacity="0.50"/><rect x="29.0" y="210.3" width="17.0" height="2.0" fill="#B0B0B0" opacity="0.50"/><rect x="10.0" y="213.2" width="18.0" height="2.0" fill="#9CDCFE" opacity="0.50"/><rect x="29.0" y="213.2" width="19.0" height="2.0" fill="#CE9178" opacity="0.50"/><rect x="8.0" y="216.1" width="14.0" height="2.0" fill="#B0B0B0" opacity="0.50"/><rect x="27.0" y="216.1" width="5.0" height="2.0" fill="#B0B0B0" opacity="0.50"/><rect x="8.0" y="219.0" width="13.0" height="2.0" fill="#B0B0B0" opacity="0.50"/><rect x="27.0" y="219.0" width="6.0" height="2.0" fill="#B0B0B0" opacity="0.50"/><rect x="12.0" y="221.9" width="17.0" height="2.0" fill="#4FC1FF" opacity="0.50"/><rect x="31.0" y="221.9" width="3.0" height="2.0" fill="#B0B0B0" opacity="0.50"/><rect x="10.0" y="224.8" width="12.0" height="2.0" fill="#B0B0B0" opacity="0.50"/><rect x="29.0" y="224.8" width="9.0" height="2.0" fill="#CE9178" opacity="0.50"/><rect x="8.0" y="230.6" width="15.0" height="2.0" fill="#B0B0B0" opacity="0.50"/><rect x="27.0" y="230.6" width="17.0" height="2.0" fill="#B0B0B0" opacity="0.50"/><rect x="8.0" y="233.5" width="15.0" height="2.0" fill="#4FC1FF" opacity="0.50"/><rect x="27.0" y="233.5" width="11.0" height="2.0" fill="#9CDCFE" opacity="0.50"/><rect x="12.0" y="236.4" width="16.0" height="2.0" fill="#9CDCFE" opacity="0.50"/><rect x="31.0" y="236.4" width="9.0" height="2.0" fill="#B0B0B0" opacity="0.50"/><rect x="8.0" y="239.3" width="15.0" height="2.0" fill="#9CDCFE" opacity="0.50"/><rect x="27.0" y="239.3" width="7.0" height="2.0" fill="#9CDCFE" opacity="0.50"/><rect x="10.0" y="242.2" width="15.0" height="2.0" fill="#9CDCFE" opacity="0.50"/><rect x="29.0" y="242.2" width="5.0" height="2.0" fill="#B0B0B0" opacity="0.50"/><rect x="8.0" y="245.1" width="11.0" height="2.0" fill="#4FC1FF" opacity="0.50"/><rect x="27.0" y="245.1" width="18.0" height="2.0" fill="#B0B0B0" opacity="0.50"/><rect x="4.0" y="248.0" width="10.0" height="2.0" fill="#DCDCAA" opacity="0.50"/><rect x="15.0" y="248.0" width="24.0" height="2.0" fill="#4FC1FF" opacity="0.50"/><rect x="10.0" y="250.9" width="9.0" height="2.0" fill="#DCDCAA" opacity="0.50"/><rect x="20.0" y="250.9" width="14.0" height="2.0" fill="#B0B0B0" opacity="0.50"/><rect x="8.0" y="253.8" width="14.0" height="2.0" fill="#B0B0B0" opacity="0.50"/><rect x="27.0" y="253.8" width="4.0" height="2.0" fill="#CE9178" opacity="0.50"/><rect x="12.0" y="256.7" width="14.0" height="2.0" fill="#B0B0B0" opacity="0.50"/><rect x="31.0" y="256.7" width="14.0" height="2.0" fill="#B0B0B0" opacity="0.50"/><rect x="12.0" y="259.6" width="10.0" height="2.0" fill="#B0B0B0" opacity="0.50"/><rect x="31.0" y="259.6" width="7.0" height="2.0" fill="#B0B0B0" opacity="0.50"/><rect x="10.0" y="262.5" width="13.0" height="2.0" fill="#9CDCFE" opacity="0.50"/><rect x="29.0" y="262.5" width="11.0" height="2.0" fill="#9CDCFE" opacity="0.50"/><rect x="8.0" y="265.4" width="10.0" height="2.0" fill="#B0B0B0" opacity="0.50"/><rect x="27.0" y="265.4" width="6.0" height="2.0" fill="#B0B0B0" opacity="0.50"/><rect x="8.0" y="268.3" width="18.0" height="2.0" fill="#B0B0B0" opacity="0.50"/><rect x="27.0" y="268.3" width="14.0" height="2.0" fill="#9CDCFE" opacity="0.50"/><rect x="12.0" y="271.2" width="13.0" height="2.0" fill="#9CDCFE" opacity="0.50"/><rect x="31.0" y="271.2" width="18.0" height="2.0" fill="#B0B0B0" opacity="0.50"/><rect x="8.0" y="274.1" width="10.0" height="2.0" fill="#4FC1FF" opacity="0.50"/><rect x="27.0" y="274.1" width="20.0" height="2.0" fill="#CE9178" opacity="0.50"/><rect x="0.0" y="282.8" width="21.0" height="2.0" fill="#6A9955" opacity="0.50"/><rect x="0.0" y="285.7" width="25.0" height="2.0" fill="#6A9955" opacity="0.50"/><rect x="4.0" y="288.6" width="8.0" height="2.0" fill="#B0B0B0" opacity="0.50"/><rect x="13.0" y="288.6" width="21.0" height="2.0" fill="#9CDCFE" opacity="0.50"/><rect x="6.0" y="291.5" width="7.0" height="2.0" fill="#4EC9B0" opacity="0.50"/><rect x="14.0" y="291.5" width="17.0" height="2.0" fill="#4FC1FF" opacity="0.50"/><rect x="4.0" y="294.4" width="11.0" height="2.0" fill="#DCDCAA" opacity="0.50"/><rect x="16.0" y="294.4" width="10.0" height="2.0" fill="#B0B0B0" opacity="0.50"/><rect x="6.0" y="297.3" width="12.0" height="2.0" fill="#B0B0B0" opacity="0.50"/><rect x="19.0" y="297.3" width="18.0" height="2.0" fill="#CE9178" opacity="0.50"/><rect x="10.0" y="300.2" width="7.0" height="2.0" fill="#4EC9B0" opacity="0.50"/><rect x="18.0" y="300.2" width="27.0" height="2.0" fill="#B0B0B0" opacity="0.50"/><rect x="0.0" y="308.9" width="26.0" height="2.0" fill="#6A9955" opacity="0.50"/><rect x="4.0" y="311.8" width="10.0" height="2.0" fill="#4EC9B0" opacity="0.50"/><rect x="15.0" y="311.8" width="13.0" height="2.0" fill="#CE9178" opacity="0.50"/><rect x="4.0" y="314.7" width="4.0" height="2.0" fill="#B0B0B0" opacity="0.50"/><rect x="9.0" y="314.7" width="20.0" height="2.0" fill="#B0B0B0" opacity="0.50"/><rect x="2.0" y="317.6" width="11.0" height="2.0" fill="#B0B0B0" opacity="0.50"/><rect x="14.0" y="317.6" width="21.0" height="2.0" fill="#4FC1FF" opacity="0.50"/><rect x="4.0" y="320.5" width="11.0" height="2.0" fill="#4EC9B0" opacity="0.50"/><rect x="16.0" y="320.5" width="10.0" height="2.0" fill="#B0B0B0" opacity="0.50"/><rect x="6.0" y="323.4" width="4.0" height="2.0" fill="#9CDCFE" opacity="0.50"/><rect x="11.0" y="323.4" width="21.0" height="2.0" fill="#CE9178" opacity="0.50"/><rect x="10.0" y="326.3" width="6.0" height="2.0" fill="#DCDCAA" opacity="0.50"/><rect x="17.0" y="326.3" width="8.0" height="2.0" fill="#4FC1FF" opacity="0.50"/><rect x="6.0" y="329.2" width="13.0" height="2.0" fill="#4EC9B0" opacity="0.50"/><rect x="20.0" y="329.2" width="28.0" height="2.0" fill="#9CDCFE" opacity="0.50"/><rect x="6.0" y="332.1" width="12.0" height="2.0" fill="#B0B0B0" opacity="0.50"/><rect x="19.0" y="332.1" width="30.0" height="2.0" fill="#9CDCFE" opacity="0.50"/><rect x="8.0" y="335.0" width="12.0" height="2.0" fill="#B0B0B0" opacity="0.50"/><rect x="21.0" y="335.0" width="13.0" height="2.0" fill="#4FC1FF" opacity="0.50"/><rect x="8.0" y="337.9" width="7.0" height="2.0" fill="#B0B0B0" opacity="0.50"/><rect x="16.0" y="337.9" width="8.0" height="2.0" fill="#CE9178" opacity="0.50"/><rect x="8.0" y="340.8" width="11.0" height="2.0" fill="#9CDCFE" opacity="0.50"/><rect x="20.0" y="340.8" width="17.0" height="2.0" fill="#B0B0B0" opacity="0.50"/><rect x="8.0" y="343.7" width="4.0" height="2.0" fill="#DCDCAA" opacity="0.50"/><rect x="13.0" y="343.7" width="4.0" height="2.0" fill="#B0B0B0" opacity="0.50"/><rect x="8.0" y="349.5" width="10.0" height="2.0" fill="#4EC9B0" opacity="0.50"/><rect x="19.0" y="349.5" width="19.0" height="2.0" fill="#B0B0B0" opacity="0.50"/><rect x="10.0" y="352.4" width="6.0" height="2.0" fill="#4EC9B0" opacity="0.50"/><rect x="17.0" y="352.4" width="21.0" height="2.0" fill="#4FC1FF" opacity="0.50"/><rect x="6.0" y="355.3" width="10.0" height="2.0" fill="#B0B0B0" opacity="0.50"/><rect x="17.0" y="355.3" width="11.0" height="2.0" fill="#4FC1FF" opacity="0.50"/><rect x="6.0" y="358.2" width="6.0" height="2.0" fill="#B0B0B0" opacity="0.50"/><rect x="13.0" y="358.2" width="17.0" height="2.0" fill="#4FC1FF" opacity="0.50"/><rect x="8.0" y="361.1" width="9.0" height="2.0" fill="#4EC9B0" opacity="0.50"/><rect x="18.0" y="361.1" width="10.0" height="2.0" fill="#4FC1FF" opacity="0.50"/><rect x="8.0" y="364.0" width="4.0" height="2.0" fill="#B0B0B0" opacity="0.50"/><rect x="13.0" y="364.0" width="8.0" height="2.0" fill="#B0B0B0" opacity="0.50"/><rect x="2.0" y="366.9" width="7.0" height="2.0" fill="#9CDCFE" opacity="0.50"/><rect x="10.0" y="366.9" width="11.0" height="2.0" fill="#B0B0B0" opacity="0.50"/><rect x="10.0" y="369.8" width="8.0" height="2.0" fill="#B0B0B0" opacity="0.50"/><rect x="19.0" y="369.8" width="27.0" height="2.0" fill="#CE9178" opacity="0.50"/><rect x="4.0" y="372.7" width="13.0" height="2.0" fill="#DCDCAA" opacity="0.50"/><rect x="18.0" y="372.7" width="7.0" height="2.0" fill="#4FC1FF" opacity="0.50"/><rect x="10.0" y="375.6" width="13.0" height="2.0" fill="#4EC9B0" opacity="0.50"/><rect x="24.0" y="375.6" width="20.0" height="2.0" fill="#CE9178" opacity="0.50"/><rect x="12.0" y="378.5" width="13.0" height="2.0" fill="#B0B0B0" opacity="0.50"/><rect x="31.0" y="378.5" width="19.0" height="2.0" fill="#B0B0B0" opacity="0.50"/><rect x="8.0" y="381.4" width="16.0" height="2.0" fill="#B0B0B0" opacity="0.50"/><rect x="27.0" y="381.4" width="16.0" height="2.0" fill="#CE9178" opacity="0.50"/><rect x="12.0" y="384.3" width="12.0" height="2.0" fill="#B0B0B0" opacity="0.50"/><rect x="31.0" y="384.3" width="9.0" height="2.0" fill="#CE9178" opacity="0.50"/><rect x="12.0" y="387.2" width="13.0" height="2.0" fill="#B0B0B0" opacity="0.50"/><rect x="31.0" y="387.2" width="9.0" height="2.0" fill="#CE9178" opacity="0.50"/><rect x="8.0" y="390.1" width="13.0" height="2.0" fill="#9CDCFE" opacity="0.50"/><rect x="22.0" y="390.1" width="11.0" height="2.0" fill="#CE9178" opacity="0.50"/><rect x="4.0" y="393.0" width="9.0" height="2.0" fill="#B0B0B0" opacity="0.50"/><rect x="14.0" y="393.0" width="10.0" height="2.0" fill="#9CDCFE" opacity="0.50"/><rect x="8.0" y="395.9" width="11.0" height="2.0" fill="#9CDCFE" opacity="0.50"/><rect x="27.0" y="395.9" width="10.0" height="2.0" fill="#9CDCFE" opacity="0.50"/><rect x="12.0" y="398.8" width="11.0" height="2.0" fill="#4FC1FF" opacity="0.50"/><rect x="31.0" y="398.8" width="15.0" height="2.0" fill="#9CDCFE" opacity="0.50"/><rect x="10.0" y="401.7" width="16.0" height="2.0" fill="#B0B0B0" opacity="0.50"/><rect x="29.0" y="401.7" width="7.0" height="2.0" fill="#9CDCFE" opacity="0.50"/><rect x="10.0" y="404.6" width="10.0" height="2.0" fill="#9CDCFE" opacity="0.50"/><rect x="29.0" y="404.6" width="9.0" height="2.0" fill="#CE9178" opacity="0.50"/><rect x="12.0" y="407.5" width="15.0" height="2.0" fill="#4FC1FF" opacity="0.50"/><rect x="31.0" y="407.5" width="6.0" height="2.0" fill="#CE9178" opacity="0.50"/><rect x="12.0" y="410.4" width="15.0" height="2.0" fill="#B0B0B0" opacity="0.50"/><rect x="31.0" y="410.4" width="9.0" height="2.0" fill="#9CDCFE" opacity="0.50"/><rect x="10.0" y="413.3" width="11.0" height="2.0" fill="#9CDCFE" opacity="0.50"/><rect x="29.0" y="413.3" width="4.0" height="2.0" fill="#CE9178" opacity="0.50"/><rect x="12.0" y="416.2" width="18.0" height="2.0" fill="#B0B0B0" opacity="0.50"/><rect x="31.0" y="416.2" width="18.0" height="2.0" fill="#9CDCFE" opacity="0.50"/><rect x="8.0" y="419.1" width="12.0" height="2.0" fill="#9CDCFE" opacity="0.50"/><rect x="27.0" y="419.1" width="9.0" height="2.0" fill="#9CDCFE" opacity="0.50"/><rect x="8.0" y="424.9" width="14.0" height="2.0" fill="#B0B0B0" opacity="0.50"/><rect x="27.0" y="424.9" width="6.0" height="2.0" fill="#CE9178" opacity="0.50"/><rect x="8.0" y="427.8" width="12.0" height="2.0" fill="#B0B0B0" opacity="0.50"/><rect x="27.0" y="427.8" width="17.0" height="2.0" fill="#9CDCFE" opacity="0.50"/><rect x="8.0" y="430.7" width="15.0" height="2.0" fill="#4FC1FF" opacity="0.50"/><rect x="27.0" y="430.7" width="17.0" height="2.0" fill="#B0B0B0" opacity="0.50"/><rect x="12.0" y="433.6" width="15.0" height="2.0" fill="#4FC1FF" opacity="0.50"/><rect x="31.0" y="433.6" width="9.0" height="2.0" fill="#CE9178" opacity="0.50"/><rect x="10.0" y="436.5" width="10.0" height="2.0" fill="#B0B0B0" opacity="0.50"/><rect x="29.0" y="436.5" width="4.0" height="2.0" fill="#9CDCFE" opacity="0.50"/><rect x="4.0" y="439.4" width="10.0" height="2.0" fill="#DCDCAA" opacity="0.50"/><rect x="15.0" y="439.4" width="15.0" height="2.0" fill="#CE9178" opacity="0.50"/><rect x="6.0" y="442.3" width="7.0" height="2.0" fill="#9CDCFE" opacity="0.50"/><rect x="14.0" y="442.3" width="7.0" height="2.0" fill="#B0B0B0" opacity="0.50"/><rect x="4.0" y="445.2" width="5.0" height="2.0" fill="#DCDCAA" opacity="0.50"/><rect x="10.0" y="445.2" width="22.0" height="2.0" fill="#9CDCFE" opacity="0.50"/><rect x="8.0" y="451.0" width="13.0" height="2.0" fill="#B0B0B0" opacity="0.50"/><rect x="22.0" y="451.0" width="29.0" height="2.0" fill="#CE9178" opacity="0.50"/><rect x="4.0" y="453.9" width="5.0" height="2.0" fill="#9CDCFE" opacity="0.50"/><rect x="10.0" y="453.9" width="30.0" height="2.0" fill="#4FC1FF" opacity="0.50"/></svg><div class="ab" style="left:308px;top:102px;width:876px;height:983px;background:#202020;border:1px solid #202020;border-left:2px solid #4a4a4a;border-right:2px solid #4a4a4a;border-bottom:1px solid #585858;box-shadow:0 0 12px rgba(0,0,0,.5)"></div><div class="ab" style="left:319px;top:112px;width:143px;height:56px;background:#828282;border-radius:7px"></div><svg class="ab" style="left:333px;top:126px" width="28" height="28" viewBox="0 0 28 28"><g fill="none" stroke="#111" stroke-width="2.2"><path d="M11 23 H5 C3.5 23 3 22.5 3 21 V5 C3 3.5 3.5 3 5 3 H21 C22.5 3 23 3.5 23 5 V11"/><path d="M3.5 19 L10 13 L14 17"/><circle cx="17" cy="8" r="1.8" fill="#111" stroke="none"/></g><path d="M12 26 L13 21 L22 12 L26 16 L17 25 Z" fill="#111"/></svg><div class="ab" style="left:372px;top:126px;font-size:20px;letter-spacing:-0.95px;line-height:26px;color:#161616;white-space:pre">Redigera</div><div class="ab" style="left:483.8px;top:137.9px;width:5.2px;height:5.2px;border-radius:50%;background:#fff"></div><div class="ab" style="left:496.6px;top:137.9px;width:5.2px;height:5.2px;border-radius:50%;background:#fff"></div><div class="ab" style="left:509.4px;top:137.9px;width:5.2px;height:5.2px;border-radius:50%;background:#fff"></div><div class="ab" style="left:656px;top:127px;font-size:20px;letter-spacing:-0.8px;line-height:26px;color:#fff;white-space:pre">apartments_colored....</div><div class="ab" style="left:887.4px;top:137.9px;width:5.2px;height:5.2px;border-radius:50%;background:#fff"></div><div class="ab" style="left:900.2px;top:137.9px;width:5.2px;height:5.2px;border-radius:50%;background:#fff"></div><div class="ab" style="left:913.0px;top:137.9px;width:5.2px;height:5.2px;border-radius:50%;background:#fff"></div><div class="ab" style="left:947px;top:115px;width:1px;height:50px;background:#3a3a3a"></div><div class="ab" style="left:987px;top:139px;width:16px;height:1.5px;background:#fff"></div><div class="ab" style="left:1062px;top:131.5px;width:15.5px;height:15.5px;border:1.5px solid #fff;border-radius:2px"></div><svg class="ab" style="left:1136px;top:131px" width="18" height="18"><path d="M1 1 L17 17 M17 1 L1 17" stroke="#fff" stroke-width="1.6"/></svg><div class="ab" style="left:326px;top:177px;width:842px;height:832px;background:#fff"></div><div class="ab" style="left:309px;top:1010px;width:874px;height:74px;background:#272727;border-top:2px solid #1b1b1b"></div><div class="ab" style="left:309px;top:1013px;width:874px;height:1px;background:#2e2e2e"></div><div class="ab" style="left:309px;top:1081px;width:874px;height:1px;background:#2e2e2e"></div><div class="ab" style="left:398px;top:1023px;width:1.5px;height:48px;background:#3d3d3d"></div><div class="ab" style="left:1094px;top:1023px;width:1.5px;height:48px;background:#3d3d3d"></div><svg class="ab" style="left:336px;top:1036px" width="29" height="22" viewBox="0 0 29 22"><rect x="2" y="1.5" width="25" height="19" rx="3.5" fill="none" stroke="#fff" stroke-width="2.2"/><path d="M2 15 H27" stroke="#fff" stroke-width="2"/><g fill="#fff"><rect x="6" y="16.5" width="2.5" height="2.5"/><rect x="11" y="16.5" width="2.5" height="2.5"/><rect x="16" y="16.5" width="2.5" height="2.5"/><rect x="21" y="16.5" width="2.5" height="2.5"/></g></svg><svg class="ab" style="left:429px;top:1035px" width="28" height="24" viewBox="0 0 28 24"><path d="M14 22 L3.5 11.5 C0.5 8.5 1 3.5 5 2 C8.5 0.8 11.5 2.5 14 5.5 C16.5 2.5 19.5 0.8 23 2 C27 3.5 27.5 8.5 24.5 11.5 Z" fill="none" stroke="#8e8e8e" stroke-width="1.8" stroke-linejoin="round"/></svg><svg class="ab" style="left:498px;top:1033px" width="27" height="27" viewBox="0 0 27 27"><circle cx="13.5" cy="13.5" r="11.5" fill="none" stroke="#fff" stroke-width="2"/><circle cx="13.5" cy="8" r="1.6" fill="#fff"/><rect x="12.4" y="11" width="2.2" height="9" fill="#fff"/></svg><div class="ab" style="left:566.5px;top:1045.4px;width:5.2px;height:5.2px;border-radius:50%;background:#fff"></div><div class="ab" style="left:578.2px;top:1045.4px;width:5.2px;height:5.2px;border-radius:50%;background:#fff"></div><div class="ab" style="left:589.9px;top:1045.4px;width:5.2px;height:5.2px;border-radius:50%;background:#fff"></div><svg class="ab" style="left:700px;top:1035px" width="24" height="24" viewBox="0 0 24 24"><path d="M2 8 V5.5 C2 3.5 3.5 2 5.5 2 H8 M16 2 H18.5 C20.5 2 22 3.5 22 5.5 V8 M22 16 V18.5 C22 20.5 20.5 22 18.5 22 H16 M8 22 H5.5 C3.5 22 2 20.5 2 18.5 V16" fill="none" stroke="#fff" stroke-width="2" stroke-linecap="round"/><circle cx="12" cy="12" r="2.6" fill="none" stroke="#fff" stroke-width="1.8"/><circle cx="6" cy="6.5" r="1" fill="#fff"/></svg><svg class="ab" style="left:769px;top:1035px" width="24" height="24" viewBox="0 0 24 24"><path d="M2 8 V5.5 C2 3.5 3.5 2 5.5 2 H8 M16 2 H18.5 C20.5 2 22 3.5 22 5.5 V8 M22 16 V18.5 C22 20.5 20.5 22 18.5 22 H16 M8 22 H5.5 C3.5 22 2 20.5 2 18.5 V16" fill="none" stroke="#fff" stroke-width="2" stroke-linecap="round"/><path d="M7 7.5 H17 M7 12 H17 M7 16.5 H13" stroke="#fff" stroke-width="2" stroke-linecap="round"/></svg><svg class="ab" style="left:968px;top:1037px" width="26" height="20" viewBox="0 0 26 20"><rect x="1" y="1" width="24" height="18" fill="none" stroke="#fff" stroke-width="2"/><path d="M5 8 V5 H8 M18 5 H21 V8 M21 12 V15 H18 M8 15 H5 V12" fill="none" stroke="#fff" stroke-width="1.5"/><circle cx="13" cy="10" r="4" fill="#fff"/></svg><div class="ab" style="left:1035.4px;top:1045.4px;width:5.2px;height:5.2px;border-radius:50%;background:#fff"></div><div class="ab" style="left:1047.1px;top:1045.4px;width:5.2px;height:5.2px;border-radius:50%;background:#fff"></div><div class="ab" style="left:1058.8px;top:1045.4px;width:5.2px;height:5.2px;border-radius:50%;background:#fff"></div><svg class="ab" style="left:1130px;top:1035px" width="25" height="25" viewBox="0 0 25 25"><path d="M3 22 L22 3 M13 3 H22 V12 M3 13 V22 H12" fill="none" stroke="#fff" stroke-width="2"/></svg><svg class="ab" style="left:0;top:0" width="1704" height="1136" viewBox="0 0 1704 1136"><defs><clipPath id="img"><rect x="326" y="177" width="842" height="832"/></clipPath></defs><g clip-path="url(#img)"><polygon points="367.0,402.0 396.0,402.0 396.0,670.0 710.8,669.2 874.5,690.0 877.5,658.3 952.5,667.5 949.2,700.0 1034.2,710.8 1036.0,740.0 1030.8,738.0 915.8,724.0 856.7,717.0 797.5,709.0 739.2,702.0 730.0,766.0 680.8,761.0 663.7,757.0 663.7,700.0 367.0,700.0" fill="#FF0000" stroke="#FF0000" stroke-width="0.7" stroke-linejoin="miter"/><polygon points="337.0,470.0 368.0,470.0 368.0,564.0 337.0,564.0" fill="#FF0000" stroke="#FF0000" stroke-width="0.7" stroke-linejoin="miter"/><path d="M367.5 679.5 A18 18 0 0 0 349 697.5 L367.5 697.5 Z" fill="#FF0000" stroke="#FF0000" stroke-width="0.5"/><polygon points="367.0,294.5 583.5,294.5 583.5,314.0 609.0,314.0 609.0,370.0 583.5,370.0 583.5,396.0 395.5,396.0 395.5,403.0 367.0,403.0" fill="#FF6666" stroke="#FF6666" stroke-width="0.7" stroke-linejoin="miter"/><path d="M395.5 403.0 L395.5 419.0 A16.0 16.0 0 0 1 379.5 403.0 Z" fill="#FF6666" stroke="#FF6666" stroke-width="0.5"/><polygon points="395.5,396.0 583.5,396.0 583.5,454.5 395.5,454.5" fill="#66FF8C" stroke="#66FF8C" stroke-width="0.7" stroke-linejoin="miter"/><path d="M395.5 446.0 L379.5 446.0 A16.0 16.0 0 0 1 395.5 430.0 Z" fill="#66FF8C" stroke="#66FF8C" stroke-width="0.5"/><polygon points="395.5,454.5 583.5,454.5 583.5,514.0 395.5,514.0" fill="#B566FF" stroke="#B566FF" stroke-width="0.7" stroke-linejoin="miter"/><path d="M395.5 470.5 L395.5 486.5 A16.0 16.0 0 0 1 379.5 470.5 Z" fill="#B566FF" stroke="#B566FF" stroke-width="0.5"/><polygon points="395.5,514.0 583.5,514.0 583.5,574.0 395.5,574.0" fill="#FFE066" stroke="#FFE066" stroke-width="0.7" stroke-linejoin="miter"/><path d="M395.5 564.0 L379.5 564.0 A16.0 16.0 0 0 1 395.5 548.0 Z" fill="#FFE066" stroke="#FFE066" stroke-width="0.5"/><polygon points="395.5,574.0 583.5,574.0 583.5,592.0 609.0,592.0 609.0,649.0 583.5,649.0 583.5,670.8 395.5,670.8" fill="#66E8FF" stroke="#66E8FF" stroke-width="0.7" stroke-linejoin="miter"/><path d="M395.5 629.5 L395.5 645.5 A16.0 16.0 0 0 1 379.5 629.5 Z" fill="#66E8FF" stroke="#66E8FF" stroke-width="0.5"/><polygon points="366.8,697.5 431.0,697.5 431.0,883.0 366.8,883.0" fill="#FF66C2" stroke="#FF66C2" stroke-width="0.7" stroke-linejoin="miter"/><path d="M420.2 697.5 L405.2 697.5 A15.0 15.0 0 0 1 420.2 682.5 Z" fill="#FF66C2" stroke="#FF66C2" stroke-width="0.5"/><polygon points="431.0,697.5 491.0,697.5 491.0,883.0 431.0,883.0" fill="#99FF66" stroke="#99FF66" stroke-width="0.7" stroke-linejoin="miter"/><path d="M446.8 697.5 L446.8 682.5 A15.0 15.0 0 0 1 461.8 697.5 Z" fill="#99FF66" stroke="#99FF66" stroke-width="0.5"/><polygon points="491.0,697.5 550.7,697.5 550.7,883.0 491.0,883.0" fill="#6666FF" stroke="#6666FF" stroke-width="0.7" stroke-linejoin="miter"/><path d="M539.7 697.5 L524.7 697.5 A15.0 15.0 0 0 1 539.7 682.5 Z" fill="#6666FF" stroke="#6666FF" stroke-width="0.5"/><polygon points="550.7,697.5 610.2,697.5 610.2,883.0 550.7,883.0" fill="#FF8C66" stroke="#FF8C66" stroke-width="0.7" stroke-linejoin="miter"/><path d="M566.0 697.5 L566.0 682.5 A15.0 15.0 0 0 1 581.0 697.5 Z" fill="#FF8C66" stroke="#FF8C66" stroke-width="0.5"/><polygon points="610.2,697.5 663.7,697.5 663.7,755.0 680.8,758.7 730.0,764.2 713.5,883.0 610.2,883.0" fill="#66FFB3" stroke="#66FFB3" stroke-width="0.7" stroke-linejoin="miter"/><path d="M665.0 758.3 L665.0 743.3 A15.0 15.0 0 0 1 680.0 758.3 Z" fill="#66FFB3" stroke="#66FFB3" stroke-width="0.5"/><polygon points="739.2,699.2 797.5,706.7 774.0,890.5 713.5,883.0" fill="#E066FF" stroke="#E066FF" stroke-width="0.7" stroke-linejoin="miter"/><path d="M755.0 701.0 L755.0 687.0 A14.0 14.0 0 0 1 769.0 701.0 Z" fill="#E066FF" stroke="#E066FF" stroke-width="0.5"/><polygon points="797.5,706.7 856.7,715.0 833.2,898.0 774.0,890.5" fill="#EBFF66" stroke="#EBFF66" stroke-width="0.7" stroke-linejoin="miter"/><path d="M855.8 714.5 L839.8 714.5 A16.0 16.0 0 0 1 855.8 698.5 Z" fill="#EBFF66" stroke="#EBFF66" stroke-width="0.5"/><polygon points="856.7,715.0 915.8,721.7 893.2,905.5 833.2,898.0" fill="#66C2FF" stroke="#66C2FF" stroke-width="0.7" stroke-linejoin="miter"/><path d="M866.7 716.5 L866.7 702.5 A14.0 14.0 0 0 1 880.7 716.5 Z" fill="#66C2FF" stroke="#66C2FF" stroke-width="0.5"/><polygon points="915.8,721.7 1030.8,735.8 1020.8,847.5 1007.0,847.5 998.2,919.5 893.2,905.5" fill="#FF6699" stroke="#FF6699" stroke-width="0.7" stroke-linejoin="miter"/><path d="M985.8 730.8 L968.8 730.8 A17.0 17.0 0 0 1 985.8 713.8 Z" fill="#FF6699" stroke="#FF6699" stroke-width="0.5"/><polygon points="1034.2,707.5 1131.7,720.8 1127.0,745.0 1119.0,790.5 1142.0,795.0 1130.8,849.5 1107.0,847.5 1088.2,931.2 998.2,919.5 1007.0,847.5 1020.8,847.5 1030.8,735.8 1034.2,729.8" fill="#6BFF66" stroke="#6BFF66" stroke-width="0.7" stroke-linejoin="miter"/><path d="M1034.2 715.8 L1034.2 729.8 A14.0 14.0 0 0 1 1020.2 715.8 Z" fill="#6BFF66" stroke="#6BFF66" stroke-width="0.5"/><g stroke="#b4b4b4" stroke-width="1" fill="none"><path d="M327 223.5 H1168" stroke="#a8a8a8" stroke-width="1.5"/><path d="M326.8 177 V1009" stroke="#9a9a9a" stroke-width="1.4"/><path d="M441.7 186 V203 M675.2 186 V200 M842.5 186 V204 M836.5 205 V232 M935.2 186 V195" stroke="#d8d8d8"/><path d="M536 269 V294 M536 274.5 H549 M536 274.5 L541 270 M536 274.5 L541 279"/><path d="M345 382.5 H367 M351 369 V382.5 M351 382.5 L347 377 M351 382.5 L355 377"/><path d="M583.5 382.5 H618 M611 369 V382.5 M611 382.5 L607 377 M611 382.5 L615 377"/><path d="M331 754 L366 757.5 M338 740 V755 M338 755 L334 750 M338 755 L342 750"/><path d="M536 887 V945 M536 945 H549 M536 945 L541 941 M536 945 L541 949"/><path d="M849.5 667 V686 M837 673 H849.5 M849.5 673 L845 669 M849.5 673 L845 677"/><path d="M822 898 L817.5 930 M808 927 H817.5 M817.5 927 L813 923 M817.5 927 L813 931"/><path d="M1107 848.7 L1162 856.2 M1155 840 V855 M1155 855 L1151 850 M1155 855 L1159 850"/></g><g font-family="Liberation Sans" fill="#2a2a2a" text-anchor="middle"><text x="536" y="253" font-size="12" font-weight="bold">A.</text><text x="332" y="379" font-size="12" font-weight="bold">B.</text><text x="631" y="379" font-size="12" font-weight="bold">B.</text><text x="536" y="961" font-size="12" font-weight="bold">A.</text><text x="852" y="652" font-size="12" font-weight="bold">D.</text><text x="816" y="945" font-size="12" font-weight="bold">D.</text><text x="536" y="262" font-size="6">A-02-1</text><text x="333" y="388" font-size="6">A-02-1</text><text x="631" y="388" font-size="6">A-02-1</text><text x="536" y="971" font-size="6">A-02-1</text><text x="852" y="661" font-size="6">A-02-1</text><text x="816" y="954" font-size="6">A-02-1</text></g></g></svg></body></html>
